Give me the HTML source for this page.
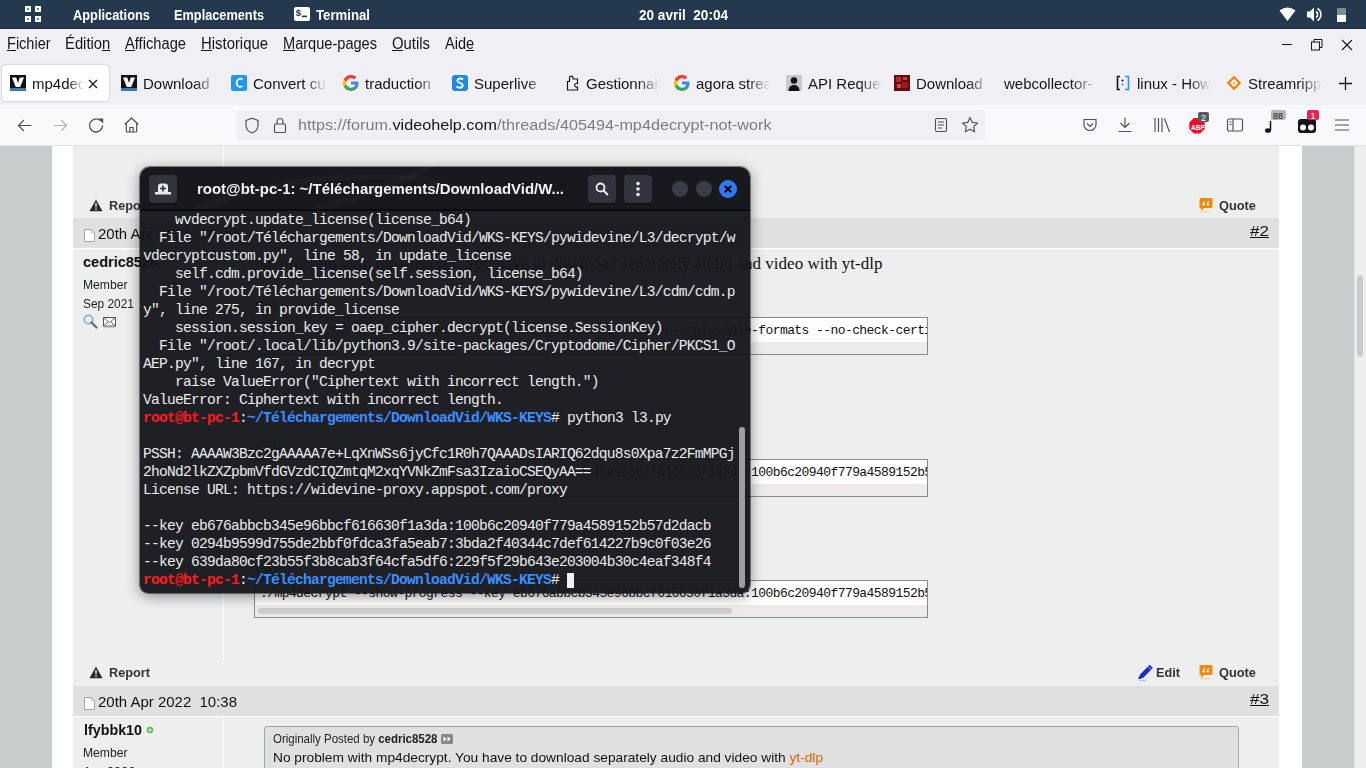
<!DOCTYPE html><html><head><meta charset="utf-8"><style>
*{margin:0;padding:0;box-sizing:border-box}
html,body{width:1366px;height:768px;overflow:hidden;background:#edefee;font-family:"Liberation Sans",sans-serif}
.a{position:absolute;white-space:nowrap}
#panel{position:absolute;left:0;top:0;width:1366px;height:29px;background:#24394d;border-bottom:1px solid #1b2833}
.pt{position:absolute;white-space:nowrap;color:#fff;font-size:15px;font-weight:bold;line-height:18px}
#menubar{position:absolute;left:0;top:29px;width:1366px;height:76px;background:#f0f0f4}
.mi{position:absolute;white-space:nowrap;font-size:16px;color:#15141a;line-height:18px}
.mi u{text-decoration:none;box-shadow:inset 0 -1px 0 #15141a;display:inline-block;line-height:18px;height:16px;vertical-align:top}
.tab{position:absolute;top:36px;height:36px;width:107px}
.fav{position:absolute;left:8px;top:10px;width:16px;height:16px}
.tt{position:absolute;white-space:nowrap;left:30px;top:9px;font-size:15px;color:#15141a;line-height:20px;width:74px;overflow:hidden;-webkit-mask-image:linear-gradient(90deg,#000 70%,transparent 100%)}
#navbar{position:absolute;left:0;top:105px;width:1366px;height:41px;background:#f9f9fb;border-bottom:1px solid #e1e1e6}
#content{position:absolute;left:0;top:146px;width:1366px;height:622px;background:#edefee;overflow:hidden}
.bold{font-weight:bold}
.term{position:absolute;left:140px;top:167px;width:610px;height:426px;border-radius:10px 10px 8px 8px;overflow:hidden;box-shadow:0 3px 14px rgba(0,0,0,.45),0 0 0 1px rgba(0,0,0,.4)}
.th{position:absolute;left:0;top:0;width:610px;height:44px;background:#18191d;border-bottom:2px solid #0a0a0c}
.tb{position:absolute;left:0;top:44px;width:610px;height:382px;background:rgba(22,23,29,.96)}
.tl{position:absolute;left:3px;font-family:"Liberation Mono",monospace;font-size:14.6px;letter-spacing:-0.76px;line-height:18px;color:#ececec;white-space:pre}
.red{color:#ff1a1a;font-weight:bold}
.blu{color:#3b8eff;font-weight:bold}
</style></head><body>
<div id="panel">
<svg class="a" style="left:24px;top:6px" width="18" height="17" viewBox="0 0 18 17">
  <g fill="#fff"><rect x="1" y="0" width="6" height="6"/><rect x="11" y="0" width="6" height="6"/><rect x="1" y="10" width="6" height="6"/><rect x="11" y="10" width="6" height="6"/></g>
  <g fill="#24394d"><rect x="3.2" y="2.2" width="1.6" height="1.6"/><rect x="13.2" y="2.2" width="1.6" height="1.6"/><rect x="3.2" y="12.2" width="1.6" height="1.6"/><rect x="13.2" y="12.2" width="1.6" height="1.6"/></g>
 </svg>
<div id="f0" class="pt" style="left:73px;top:6px;transform:scaleX(0.8554);transform-origin:0 0;">Applications</div>
<div id="f1" class="pt" style="left:174px;top:6px;transform:scaleX(0.8499);transform-origin:0 0;">Emplacements</div>
<svg class="a" style="left:294px;top:7px" width="16" height="14" viewBox="0 0 16 14"><rect x="0" y="0" width="16" height="14" rx="2" fill="#fff"/><text x="1.5" y="8.5" font-size="9.5" font-family="Liberation Mono" font-weight="bold" fill="#24394d">$</text><rect x="8" y="8.6" width="5" height="1.6" fill="#24394d"/></svg>
<div id="f2" class="pt" style="left:316px;top:6px;transform:scaleX(0.8794);transform-origin:0 0;">Terminal</div>
<div id="f3" class="pt" style="left:639px;top:6px;transform:scaleX(0.9043);transform-origin:0 0;">20 avril&nbsp; 20:04</div>
<svg class="a" style="left:1279px;top:7px" width="17" height="15" viewBox="0 0 17 15"><path d="M0.5 3.5 Q8.5 -2.5 16.5 3.5 L8.5 14 Z" fill="#fff"/></svg>
<svg class="a" style="left:1307px;top:7px" width="15" height="15" viewBox="0 0 15 15"><path d="M0 4.5h3l4-4v14l-4-4H0z" fill="#fff"/><path d="M9 4.5a3.5 3.5 0 0 1 0 6" stroke="#fff" stroke-width="1.6" fill="none"/><path d="M10.5 1.5a7 7 0 0 1 0 12" stroke="#fff" stroke-width="1.5" fill="none"/></svg>
<svg class="a" style="left:1336px;top:8px" width="11" height="14" viewBox="0 0 11 14"><rect x="1" y="0" width="9" height="14" rx="1" fill="#7e8b95"/><rect x="1" y="7" width="9" height="7" fill="#fff"/></svg>
</div>
<div id="menubar">
<div id="f4" class="mi" style="left:7px;top:6px;transform:scaleX(0.9080);transform-origin:0 0;"><u>F</u>ichier</div>
<div id="f5" class="mi" style="left:65.4px;top:6px;transform:scaleX(0.9257);transform-origin:0 0;">Éditio<u>n</u></div>
<div id="f6" class="mi" style="left:125px;top:6px;transform:scaleX(0.9184);transform-origin:0 0;"><u>A</u>ffichage</div>
<div id="f7" class="mi" style="left:201px;top:6px;transform:scaleX(0.9300);transform-origin:0 0;"><u>H</u>istorique</div>
<div id="f8" class="mi" style="left:283px;top:6px;transform:scaleX(0.9111);transform-origin:0 0;"><u>M</u>arque-pages</div>
<div id="f9" class="mi" style="left:392px;top:6px;transform:scaleX(0.9290);transform-origin:0 0;"><u>O</u>utils</div>
<div id="f10" class="mi" style="left:444.7px;top:6px;transform:scaleX(0.9054);transform-origin:0 0;">Aid<u>e</u></div>
<svg class="a" style="left:1282px;top:10px" width="11" height="11" viewBox="0 0 11 11"><path d="M0 5.5h10" stroke="#15141a" stroke-width="1"/></svg>
 <svg class="a" style="left:1311px;top:10px" width="12" height="12" viewBox="0 0 12 12"><rect x="0.5" y="3" width="8" height="8" fill="none" stroke="#15141a"/><path d="M3 3V0.5h8V8.5H8.5" fill="none" stroke="#15141a"/></svg>
 <svg class="a" style="left:1341px;top:10px" width="12" height="12" viewBox="0 0 12 12"><path d="M1 1L11 11M11 1L1 11" stroke="#15141a" stroke-width="1.1"/></svg>
<div class="a" style="left:2px;top:36px;width:107px;height:36px;background:#fff;border-radius:4px;box-shadow:0 0 2px rgba(0,0,0,.3)"></div>
<div class="tab" style="left:2px"><svg class="fav" viewBox="0 0 16 16"><rect width="16" height="16" fill="#111"/><path d="M2 2.5h4.2l1.8 5.5 1.8-5.5H14l-3.8 9.5H5.8z" fill="#fff"/><rect y="13" width="16" height="3" fill="#3a78b8"/></svg><div class="tt" style="left:30px;width:52px">mp4decrypt</div></div>
<div class="tab" style="left:113px"><svg class="fav" viewBox="0 0 16 16"><rect width="16" height="16" fill="#111"/><path d="M2 2.5h4.2l1.8 5.5 1.8-5.5H14l-3.8 9.5H5.8z" fill="#fff"/><rect y="13" width="16" height="3" fill="#3a78b8"/></svg><div class="tt" style="left:30px;width:74px">Download</div></div>
<div class="tab" style="left:223px"><svg class="fav" viewBox="0 0 16 16"><rect width="16" height="16" rx="2" fill="#2196f3"/><path d="M11.5 4.2c-.6-.5-1.4-.7-2.2-.6-2.2.3-3.8 2.6-3.7 4.9.1 1.9 1.6 3.5 3.6 3.3.9-.1 1.7-.5 2.2-1" stroke="#fff" stroke-width="1.8" fill="none"/></svg><div class="tt" style="left:30px;width:74px">Convert curl</div></div>
<div class="tab" style="left:335px"><svg class="fav" viewBox="0 0 16 16"><path d="M15.5 8.2c0-.6-.05-1.1-.15-1.6H8v3h4.2a3.6 3.6 0 0 1-1.6 2.4v2h2.6c1.5-1.4 2.3-3.4 2.3-5.8z" fill="#4285f4"/><path d="M8 16c2.2 0 4-.7 5.3-2l-2.6-2c-.7.5-1.6.8-2.7.8-2.1 0-3.9-1.4-4.5-3.3H.8v2.1A8 8 0 0 0 8 16z" fill="#34a853"/><path d="M3.5 9.5a4.8 4.8 0 0 1 0-3V4.4H.8a8 8 0 0 0 0 7.2z" fill="#fbbc05"/><path d="M8 3.2c1.2 0 2.2.4 3.1 1.2l2.3-2.3A8 8 0 0 0 .8 4.4l2.7 2.1C4.1 4.6 5.9 3.2 8 3.2z" fill="#ea4335"/></svg><div class="tt" style="left:30px;width:74px">traduction</div></div>
<div class="tab" style="left:444px"><svg class="fav" viewBox="0 0 16 16"><rect width="16" height="16" rx="3" fill="#1e88e5"/><path d="M11 4.5c-.8-.8-2-1.1-3.2-1-1.5.2-2.6 1.2-2.4 2.5.3 2.3 5.3 1.7 5.3 4.3 0 1.4-1.3 2.4-3 2.4-1.3 0-2.4-.4-3.2-1.2" stroke="#fff" stroke-width="1.9" fill="none"/></svg><div class="tt" style="left:30px;width:74px">Superlive</div></div>
<div class="tab" style="left:556px"><svg class="fav" viewBox="0 0 16 16"><path d="M3.5 15V6.5h2V3a1.8 1.8 0 0 1 3.6 0v1h4.4v4.5h-1a1.8 1.8 0 0 0 0 3.6h1V15z" fill="none" stroke="#15141a" stroke-width="1.2"/></svg><div class="tt" style="left:30px;width:74px">Gestionnaire</div></div>
<div class="tab" style="left:666px"><svg class="fav" viewBox="0 0 16 16"><path d="M15.5 8.2c0-.6-.05-1.1-.15-1.6H8v3h4.2a3.6 3.6 0 0 1-1.6 2.4v2h2.6c1.5-1.4 2.3-3.4 2.3-5.8z" fill="#4285f4"/><path d="M8 16c2.2 0 4-.7 5.3-2l-2.6-2c-.7.5-1.6.8-2.7.8-2.1 0-3.9-1.4-4.5-3.3H.8v2.1A8 8 0 0 0 8 16z" fill="#34a853"/><path d="M3.5 9.5a4.8 4.8 0 0 1 0-3V4.4H.8a8 8 0 0 0 0 7.2z" fill="#fbbc05"/><path d="M8 3.2c1.2 0 2.2.4 3.1 1.2l2.3-2.3A8 8 0 0 0 .8 4.4l2.7 2.1C4.1 4.6 5.9 3.2 8 3.2z" fill="#ea4335"/></svg><div class="tt" style="left:30px;width:74px">agora stream</div></div>
<div class="tab" style="left:778px"><svg class="fav" viewBox="0 0 16 16"><rect width="16" height="16" fill="#c9c9c9"/><circle cx="8" cy="5.5" r="3.2" fill="#111"/><path d="M2.5 16c0-4 2.4-6 5.5-6s5.5 2 5.5 6z" fill="#111"/></svg><div class="tt" style="left:30px;width:74px">API Request</div></div>
<div class="tab" style="left:886px"><svg class="fav" viewBox="0 0 16 16"><rect width="16" height="16" fill="#5a0f12"/><rect x="2" y="2" width="5" height="5" fill="#c0282c"/><rect x="8" y="7" width="6" height="6" fill="#a3161b"/><rect x="3" y="9" width="4" height="4" fill="#e04040"/><rect x="9" y="2" width="4" height="3" fill="#d33"/></svg><div class="tt" style="left:30px;width:74px">Download</div></div>
<div class="tab" style="left:997px"><div class="tt" style="left:7px;width:95px">webcollector-</div></div>
<div class="tab" style="left:1107px"><svg class="fav" viewBox="0 0 16 16"><path d="M5 1.5H2.5v13H5" fill="none" stroke="#15141a" stroke-width="1.6"/><path d="M10 1.5h3.5v13H10" fill="none" stroke="#2196f3" stroke-width="1.6"/><circle cx="7.5" cy="5.5" r="1.1" fill="#15141a"/><circle cx="7.5" cy="9.5" r="1.1" fill="#2196f3"/></svg><div class="tt" style="left:30px;width:74px">linux - How</div></div>
<div class="tab" style="left:1218px"><svg class="fav" viewBox="0 0 16 16"><path d="M8 .8L15.2 8 8 15.2.8 8z" fill="#f57c00"/><path d="M8 3.8L12.2 8 8 12.2 3.8 8z" fill="#fff"/><path d="M8.8 5L6.5 8.5h1.8L7.2 11 9.5 7.5H7.7z" fill="#f57c00"/></svg><div class="tt" style="left:30px;width:74px">Streamripper</div></div>
<svg class="a" style="left:88px;top:50px" width="10" height="10" viewBox="0 0 10 10"><path d="M1 1L9 9M9 1L1 9" stroke="#15141a" stroke-width="1.2"/></svg>
<svg class="a" style="left:1338px;top:47px" width="15" height="15" viewBox="0 0 15 15"><path d="M7.5 1v13M1 7.5h13" stroke="#15141a" stroke-width="1.3"/></svg>
</div>
<div id="navbar">
<svg class="a" style="left:16px;top:12px" width="17" height="17" viewBox="0 0 17 17"><path d="M15 8.5H2.5M7.5 3.5l-5 5 5 5" stroke="#4f4f5a" stroke-width="1.2" fill="none" stroke-linecap="round" stroke-linejoin="round"/></svg>
<svg class="a" style="left:52px;top:12px" width="17" height="17" viewBox="0 0 17 17"><path d="M2 8.5h12.5M9.5 3.5l5 5-5 5" stroke="#b0b0b8" stroke-width="1.2" fill="none" stroke-linecap="round" stroke-linejoin="round"/></svg>
<svg class="a" style="left:88px;top:12px" width="17" height="17" viewBox="0 0 17 17"><path d="M14.5 8.5A6.5 6.5 0 1 1 12.3 3.6" stroke="#4f4f5a" stroke-width="1.3" fill="none"/><path d="M10.2 1.5h5v5z" fill="#4f4f5a"/></svg>
<svg class="a" style="left:123px;top:11px" width="17" height="18" viewBox="0 0 17 18"><path d="M1.8 8.2L8.5 2l6.7 6.2M3.3 7v8.2q0 .8.8.8h8.8q.8 0 .8-.8V7M6.8 16v-4.5h3.4V16" stroke="#4f4f5a" stroke-width="1.2" fill="none" stroke-linejoin="round"/></svg>
<div class="a" style="left:236px;top:5px;width:749px;height:30px;background:#f0f0f4;border-radius:4px"></div>
<svg class="a" style="left:244px;top:12px" width="16" height="17" viewBox="0 0 16 17"><path d="M8 1.2L2 3.5v4.5c0 4 2.8 6.8 6 8 3.2-1.2 6-4 6-8V3.5z" stroke="#4f4f5a" stroke-width="1.15" fill="none"/></svg>
<svg class="a" style="left:272px;top:11px" width="16" height="18" viewBox="0 0 16 18"><rect x="2.5" y="8" width="11" height="8.5" rx="1" stroke="#4f4f5a" stroke-width="1.15" fill="none"/><path d="M5 8V5.5a3 3 0 0 1 6 0V8" stroke="#4f4f5a" stroke-width="1.15" fill="none"/></svg>
<div id="f11" class="a" style="left:298px;top:10px;transform:scaleX(1.0448);transform-origin:0 0;font-size:15.5px;line-height:20px;color:#7c7c86">https://forum.<span style="color:#15141a">videohelp.com</span>/threads/405494-mp4decrypt-not-work</div>
<svg class="a" style="left:933px;top:12px" width="16" height="16" viewBox="0 0 16 16"><rect x="2.5" y="1.5" width="11" height="13" rx="1.5" stroke="#4f4f5a" stroke-width="1.15" fill="none"/><path d="M5 5h6M5 8h6M5 11h4" stroke="#4f4f5a" stroke-width="1.15" fill="none"/></svg>
<svg class="a" style="left:961px;top:11px" width="18" height="18" viewBox="0 0 18 18"><path d="M9 1.5l2.3 4.9 5.2.6-3.9 3.6 1.1 5.2L9 13.2l-4.7 2.6 1.1-5.2L1.5 7l5.2-.6z" stroke="#4f4f5a" stroke-width="1.15" fill="none" stroke-linejoin="round"/></svg>
<svg class="a" style="left:1082px;top:12px" width="16" height="16" viewBox="0 0 16 16"><path d="M2 2.5h12v5a6 6 0 0 1-12 0z" stroke="#4f4f5a" stroke-width="1.15" fill="none"/><path d="M5 6.5l3 3 3-3" stroke="#4f4f5a" stroke-width="1.15" fill="none"/></svg>
<svg class="a" style="left:1117px;top:11px" width="16" height="17" viewBox="0 0 16 17"><path d="M8 1.5v10M3.5 7l4.5 4.5L12.5 7M1.5 15.5h13" stroke="#4f4f5a" stroke-width="1.15" fill="none"/></svg>
<svg class="a" style="left:1153px;top:12px" width="18" height="16" viewBox="0 0 18 16"><path d="M2 1v14M5.5 1v14M9 1v14M11.5 1.5l5 13.5" stroke="#4f4f5a" stroke-width="1.15" fill="none"/></svg>
<svg class="a" style="left:1188px;top:7px" width="22" height="22" viewBox="0 0 22 22"><path d="M5.8 6h6.4l4.5 4.5v6.4l-4.5 4.5H5.8l-4.5-4.5v-6.4z" fill="#e8112d"/><text x="3" y="17.5" font-size="6.5" font-weight="bold" fill="#fff" font-family="Liberation Sans">ABP</text><rect x="10" y="0" width="11" height="10" rx="2" fill="#5b5b66"/><text x="13" y="8.5" font-size="9" fill="#fff" font-family="Liberation Sans">2</text></svg>
<svg class="a" style="left:1226px;top:12px" width="18" height="16" viewBox="0 0 18 16"><rect x="1.5" y="2" width="15" height="12" rx="1.5" stroke="#4f4f5a" stroke-width="1.15" fill="none"/><path d="M7 2v12M3.5 5h2M3.5 7.5h2" stroke="#4f4f5a" stroke-width="1.15" fill="none"/></svg>
<svg class="a" style="left:1262px;top:5px" width="26" height="24" viewBox="0 0 26 24"><rect x="9" y="0" width="15" height="10" rx="2" fill="#b5b5bb"/><text x="11" y="8.5" font-size="9" fill="#15141a" font-family="Liberation Sans">88</text><path d="M8.5 11v9" stroke="#15141a" stroke-width="1.5"/><ellipse cx="6" cy="20.5" rx="3" ry="2.3" fill="#15141a"/></svg>
<svg class="a" style="left:1297px;top:5px" width="24" height="24" viewBox="0 0 24 24"><rect x="1" y="9" width="18" height="14" rx="3" fill="#15141a"/><circle cx="6" cy="17.5" r="3" fill="#fff"/><circle cx="14" cy="17.5" r="3" fill="#fff"/><rect x="10" y="0" width="12" height="10" rx="2" fill="#e22850"/><text x="13.5" y="8.5" font-size="9" fill="#fff" font-family="Liberation Sans">1</text></svg>
<svg class="a" style="left:1334px;top:13px" width="16" height="14" viewBox="0 0 16 14"><path d="M1 2h14M1 7h14M1 12h14" stroke="#4f4f5a" stroke-width="1.15" fill="none"/></svg>
</div>
<div id="content">
<div class="a" style="left:0;top:0;width:52px;height:622px;background:#c9cccd"></div>
<div class="a" style="left:52px;top:0;width:21px;height:622px;background:#fff"></div>
<div class="a" style="left:1279px;top:0;width:23px;height:622px;background:#fff"></div>
<div class="a" style="left:1302px;top:0;width:52px;height:622px;background:#c9cccd"></div>
<div class="a" style="left:1354px;top:0;width:12px;height:622px;background:#efeeed;border-left:1px solid #e4e3e2"></div>
<div class="a" style="left:1357px;top:129px;width:6px;height:82px;background:#cbcbcb;border-radius:3px"></div>
<div class="a" style="left:223px;top:0px;width:1px;height:44px;background:#fff"></div>
<div class="a" style="left:223px;top:103px;width:1px;height:411px;background:#fff"></div>
<div class="a" style="left:223px;top:571px;width:1px;height:51px;background:#fff"></div>
<div class="a" style="left:73px;top:72px;width:1206px;height:31px;background:#dfe1e0;border-bottom:1px solid #fff"></div>
<div class="a" style="left:73px;top:540px;width:1206px;height:31px;background:#dfe1e0;border-bottom:1px solid #fff"></div>
<div class="a" style="left:89px;top:52px"><svg width="14" height="13" viewBox="0 0 14 13"><path d="M7 .5L13.6 12.3H.4z" fill="#2b2b2b"/><path d="M6.3 4h1.4l-.2 4.6h-1z" fill="#fff"/><rect x="6.3" y="9.5" width="1.4" height="1.4" fill="#fff"/></svg></div>
<div id="f12" class="a bold" style="left:108.5px;top:52.2px;transform:scaleX(0.9787);transform-origin:0 0;font-size:13px;line-height:16px;color:#333">Report</div>
<div class="a" style="left:1199px;top:51px"><svg width="15" height="16" viewBox="0 0 15 16"><rect x="0.5" y="1" width="13" height="10" rx="1.5" fill="#f08a0a"/><path d="M2.5 10.5l-.8 3.5 4.3-3.5z" fill="#f08a0a"/><path d="M1.5 14.8h10" stroke="#f8cf9c" stroke-width="1.2"/><path d="M3.5 8.2c0-2.2.8-3.6 2.6-4.2v1.2c-.9.4-1.2 1-1.2 1.6h1.1v1.4zM7.6 8.2c0-2.2.8-3.6 2.6-4.2v1.2c-.9.4-1.2 1-1.2 1.6h1.1v1.4z" fill="#fff"/></svg></div>
<div id="f13" class="a bold" style="left:1218.5px;top:52.2px;transform:scaleX(0.9850);transform-origin:0 0;font-size:13px;line-height:16px;color:#333">Quote</div>
<div class="a" style="left:89px;top:519px"><svg width="14" height="13" viewBox="0 0 14 13"><path d="M7 .5L13.6 12.3H.4z" fill="#2b2b2b"/><path d="M6.3 4h1.4l-.2 4.6h-1z" fill="#fff"/><rect x="6.3" y="9.5" width="1.4" height="1.4" fill="#fff"/></svg></div>
<div id="f14" class="a bold" style="left:108.5px;top:519.2px;transform:scaleX(0.9787);transform-origin:0 0;font-size:13px;line-height:16px;color:#333">Report</div>
<div class="a" style="left:1137px;top:518px"><svg width="17" height="17" viewBox="0 0 17 17"><path d="M12.6 .8l3.3 3.3-9.6 9.6-4.4 1.6 1.1-4.9z" fill="#1b2fc4"/><path d="M11 2.6l3.3 3.3" stroke="#c9cff0" stroke-width=".9"/><path d="M1.5 14.2l1.4-1.2" stroke="#0a1a80" stroke-width="1.4"/><path d="M2 16.3h7" stroke="#a9b2e6" stroke-width="1"/></svg></div>
<div id="f15" class="a bold" style="left:1156px;top:519.2px;transform:scaleX(0.9771);transform-origin:0 0;font-size:13px;line-height:16px;color:#333">Edit</div>
<div class="a" style="left:1199px;top:518px"><svg width="15" height="16" viewBox="0 0 15 16"><rect x="0.5" y="1" width="13" height="10" rx="1.5" fill="#f08a0a"/><path d="M2.5 10.5l-.8 3.5 4.3-3.5z" fill="#f08a0a"/><path d="M1.5 14.8h10" stroke="#f8cf9c" stroke-width="1.2"/><path d="M3.5 8.2c0-2.2.8-3.6 2.6-4.2v1.2c-.9.4-1.2 1-1.2 1.6h1.1v1.4zM7.6 8.2c0-2.2.8-3.6 2.6-4.2v1.2c-.9.4-1.2 1-1.2 1.6h1.1v1.4z" fill="#fff"/></svg></div>
<div id="f16" class="a bold" style="left:1218.5px;top:519.2px;transform:scaleX(0.9850);transform-origin:0 0;font-size:13px;line-height:16px;color:#333">Quote</div>
<div class="a" style="left:84px;top:82px"><svg width="11" height="13" viewBox="0 0 12 14"><path d="M.5.5h7.5l3.5 3.5v9.5H.5z" fill="#fff" stroke="#9a9a9a"/><path d="M8 .5v3.5h3.5" fill="none" stroke="#bbb"/></svg></div>
<div id="f17" class="a" style="left:98px;top:79px;transform:scaleX(0.9979);transform-origin:0 0;font-size:15px;line-height:18px;color:#111">20th Apr 2022&nbsp;&nbsp;10:09</div>
<div id="f18" class="a" style="left:1250px;top:76px;transform:scaleX(1.1386);transform-origin:0 0;font-size:15px;line-height:18px;color:#111;text-decoration:underline">#2</div>
<div class="a" style="left:84px;top:550px"><svg width="11" height="13" viewBox="0 0 12 14"><path d="M.5.5h7.5l3.5 3.5v9.5H.5z" fill="#fff" stroke="#9a9a9a"/><path d="M8 .5v3.5h3.5" fill="none" stroke="#bbb"/></svg></div>
<div id="f19" class="a" style="left:98px;top:547px;transform:scaleX(0.9979);transform-origin:0 0;font-size:15px;line-height:18px;color:#111">20th Apr 2022&nbsp;&nbsp;10:38</div>
<div id="f20" class="a" style="left:1250px;top:544px;transform:scaleX(1.1386);transform-origin:0 0;font-size:15px;line-height:18px;color:#111;text-decoration:underline">#3</div>
<div id="f21" class="a bold" style="left:83px;top:107px;font-size:14.5px;line-height:18px;color:#111">cedric8528</div>
<div id="f22" class="a" style="left:82.8px;top:131px;transform:scaleX(0.9332);transform-origin:0 0;font-size:13px;line-height:16px;color:#222">Member</div>
<div id="f23" class="a" style="left:82.8px;top:150px;transform:scaleX(0.9161);transform-origin:0 0;font-size:13px;line-height:16px;color:#222">Sep 2021</div>
<svg class="a" style="left:83px;top:168px" width="15" height="15" viewBox="0 0 15 15"><circle cx="5.5" cy="5.5" r="4.3" fill="#e3eef8" stroke="#8aa6c4" stroke-width="1.5"/><path d="M8.5 8.5l5 5" stroke="#6a6f77" stroke-width="2.4" stroke-linecap="round"/></svg>
<svg class="a" style="left:103px;top:171px" width="13" height="11" viewBox="0 0 13 11"><rect x=".5" y=".5" width="12" height="8.5" fill="#fff" stroke="#555"/><path d="M.5.5l6 5 6-5M.5 9l4.5-4M12.5 9l-4.5-4" fill="none" stroke="#555" stroke-width=".9"/><path d="M1 10.5h11" stroke="#c8c8c8"/></svg>
<div class="a" style="left:255px;top:107.5px;font-family:'Liberation Serif',serif;font-size:17px;line-height:20px;color:#111">No problem with mp4decrypt. You have to download separately audio and video with yt-dlp</div>
<div class="a" style="left:255px;top:153px;font-size:12px;line-height:14px;color:#222">Code:</div>
<div class="a" style="left:254px;top:171px;width:674px;height:38px;border:1px solid #8a8a8a;background:#ecebea;overflow:hidden"><div class="a" style="left:0;top:0;width:672px;height:24px;background:#fff"></div><div class="a" style="left:5px;top:5px;font-family:'Liberation Mono',monospace;font-size:13px;letter-spacing:-0.58px;line-height:16px;color:#111">yt-dlp -f bv+ba https://example.com/watch/v-94431 --allow-unplayable-formats --no-check-certificate</div></div>
<div class="a" style="left:255px;top:295px;font-size:12px;line-height:14px;color:#222">Code:</div>
<div class="a" style="left:254px;top:313px;width:674px;height:38px;border:1px solid #8a8a8a;background:#ecebea;overflow:hidden"><div class="a" style="left:0;top:0;width:672px;height:24px;background:#fff"></div><div class="a" style="left:5px;top:5px;font-family:'Liberation Mono',monospace;font-size:13px;letter-spacing:-0.58px;line-height:16px;color:#111">./mp4decrypt --show-progress --key eb676abbcb345e96bbcf616630f1a3da:100b6c20940f779a4589152b57d2dacb</div></div>
<div class="a" style="left:255px;top:416px;font-size:12px;line-height:14px;color:#222">Code:</div>
<div class="a" style="left:254px;top:434px;width:674px;height:38px;border:1px solid #8a8a8a;background:#ecebea;overflow:hidden"><div class="a" style="left:0;top:0;width:672px;height:24px;background:#fff"></div><div class="a" style="left:5px;top:5px;font-family:'Liberation Mono',monospace;font-size:13px;letter-spacing:-0.58px;line-height:16px;color:#111">./mp4decrypt --show-progress --key eb676abbcb345e96bbcf616630f1a3da:100b6c20940f779a4589152b57d2dacb</div></div>
<div class="a" style="left:258px;top:462px;width:474px;height:6px;background:#cdcdcd;border-radius:3px"></div>
<div id="f24" class="a bold" style="left:83.5px;top:575px;transform:scaleX(0.9530);transform-origin:0 0;font-size:15px;line-height:18px;color:#111">lfybbk10</div>
<svg class="a" style="left:146px;top:580px" width="8" height="8" viewBox="0 0 8 8"><circle cx="4" cy="4" r="3.3" fill="#5cbf5c"/><circle cx="4" cy="4" r="1.6" fill="#c8ecc8"/></svg>
<div id="f25" class="a" style="left:82.8px;top:599px;transform:scaleX(0.9332);transform-origin:0 0;font-size:13px;line-height:16px;color:#222">Member</div>
<div id="f26" class="a" style="left:82.8px;top:617.5px;font-size:13px;line-height:16px;color:#222">Apr 2022</div>
<div class="a" style="left:264px;top:580px;width:975px;height:80px;border:1px solid #a5a5a5;border-radius:3px;background:#dfe0df"></div>
<div id="f27" class="a" style="left:273px;top:585px;transform:scaleX(0.9557);transform-origin:0 0;font-size:12px;line-height:16px;color:#222">Originally Posted by <b>cedric8528</b></div>
<svg class="a" style="left:441px;top:588px" width="12" height="10" viewBox="0 0 12 10"><rect width="12" height="10" rx="1.5" fill="#888"/><path d="M2.5 2.5l3 2.5-3 2.5zM6.5 2.5l3 2.5-3 2.5z" fill="#fff"/></svg>
<div id="f28" class="a" style="left:273px;top:603px;transform:scaleX(1.0165);transform-origin:0 0;font-size:13.5px;line-height:17px;color:#111">No problem with mp4decrypt. You have to download separately audio and video with <span style="color:#e0600a">yt-dlp</span></div>
</div>
<div class="term">
<div class="th"></div>
<svg class="a" style="left:0;top:0" width="610" height="42" viewBox="0 0 610 42"><g fill="none" stroke="rgba(255,255,255,0.025)" stroke-width="6"><path d="M20 60 Q120 5 260 10 Q300 12 330 30"/><path d="M150 50 Q230 30 300 -5"/></g></svg>
<div class="tb"></div>
<div class="tl" style="top:44px">    wvdecrypt.update_license(license_b64)</div>
<div class="tl" style="top:62px">  File &quot;/root/Téléchargements/DownloadVid/WKS-KEYS/pywidevine/L3/decrypt/w</div>
<div class="tl" style="top:80px">vdecryptcustom.py&quot;, line 58, in update_license</div>
<div class="tl" style="top:98px">    self.cdm.provide_license(self.session, license_b64)</div>
<div class="tl" style="top:116px">  File &quot;/root/Téléchargements/DownloadVid/WKS-KEYS/pywidevine/L3/cdm/cdm.p</div>
<div class="tl" style="top:134px">y&quot;, line 275, in provide_license</div>
<div class="tl" style="top:152px">    session.session_key = oaep_cipher.decrypt(license.SessionKey)</div>
<div class="tl" style="top:170px">  File &quot;/root/.local/lib/python3.9/site-packages/Cryptodome/Cipher/PKCS1_O</div>
<div class="tl" style="top:188px">AEP.py&quot;, line 167, in decrypt</div>
<div class="tl" style="top:206px">    raise ValueError(&quot;Ciphertext with incorrect length.&quot;)</div>
<div class="tl" style="top:224px">ValueError: Ciphertext with incorrect length.</div>
<div class="tl" style="top:242px"><span class="red">root@bt-pc-1</span>:<span class="blu">~/Téléchargements/DownloadVid/WKS-KEYS</span># python3 l3.py</div>
<div class="tl" style="top:278px">PSSH: AAAAW3Bzc2gAAAAA7e+LqXnWSs6jyCfc1R0h7QAAADsIARIQ62dqu8s0Xpa7z2FmMPGj</div>
<div class="tl" style="top:296px">2hoNd2lkZXZpbmVfdGVzdCIQZmtqM2xqYVNkZmFsa3IzaioCSEQyAA==</div>
<div class="tl" style="top:314px">License URL: https://widevine-proxy.appspot.com/proxy</div>
<div class="tl" style="top:350px">--key eb676abbcb345e96bbcf616630f1a3da:100b6c20940f779a4589152b57d2dacb</div>
<div class="tl" style="top:368px">--key 0294b9599d755de2bbf0fdca3fa5eab7:3bda2f40344c7def614227b9c0f03e26</div>
<div class="tl" style="top:386px">--key 639da80cf23b55f3b8cab3f64cfa5df6:229f5f29b643e203004b30c4eaf348f4</div>
<div class="tl" style="top:404px"><span class="red">root@bt-pc-1</span>:<span class="blu">~/Téléchargements/DownloadVid/WKS-KEYS</span># </div>
<div class="a" style="left:427px;top:406px;width:7px;height:15px;background:#f0f0f0"></div>
<div style="position:absolute;top:8px;width:28px;height:28px;border-radius:4px;background:#31333d;box-shadow:0 1px 1px rgba(0,0,0,.5);left:9px"><svg style="position:absolute;left:6px;top:7px" width="16" height="14" viewBox="0 0 16 14"><path d="M3 11V4.5Q3 1.5 6 1.5h4Q13 1.5 13 4.5V11z" fill="#e8e8e8"/><rect x="0" y="10" width="16" height="2.5" fill="#e8e8e8"/><path d="M8 3.5v6M5 6.5h6" stroke="#31333d" stroke-width="1.6"/></svg></div>
<div id="f29" class="a" style="left:56.6px;top:12px;transform:scaleX(0.9969);transform-origin:0 0;font-size:15px;font-weight:bold;line-height:20px;color:#f2f2f2">root@bt-pc-1: ~/Téléchargements/DownloadVid/W...</div>
<div style="position:absolute;top:8px;width:28px;height:28px;border-radius:4px;background:#31333d;box-shadow:0 1px 1px rgba(0,0,0,.5);left:448px"><svg style="position:absolute;left:7px;top:7px" width="14" height="14" viewBox="0 0 14 14"><circle cx="5.5" cy="5.5" r="4" fill="none" stroke="#eee" stroke-width="1.8"/><path d="M8.5 8.5l4.5 4.5" stroke="#eee" stroke-width="2"/></svg></div>
<div style="position:absolute;top:8px;width:28px;height:28px;border-radius:4px;background:#31333d;box-shadow:0 1px 1px rgba(0,0,0,.5);left:484px"><svg style="position:absolute;left:11px;top:6px" width="6" height="16" viewBox="0 0 6 16"><circle cx="3" cy="2.5" r="1.8" fill="#eee"/><circle cx="3" cy="8" r="1.8" fill="#eee"/><circle cx="3" cy="13.5" r="1.8" fill="#eee"/></svg></div>
<div class="a" style="left:532px;top:14px;width:16px;height:16px;border-radius:50%;background:#3a3d48"></div>
<div class="a" style="left:556px;top:14px;width:16px;height:16px;border-radius:50%;background:#3a3d48"></div>
<svg class="a" style="left:579px;top:13px" width="18" height="18" viewBox="0 0 18 18"><circle cx="9" cy="9" r="9" fill="#2f7bf5"/><path d="M5.8 5.8l6.4 6.4M12.2 5.8l-6.4 6.4" stroke="#000" stroke-width="2"/></svg>
<div class="a" style="left:599px;top:260px;width:6px;height:161px;background:#9c9ea3;border-radius:3px"></div>
</div>
</body></html>
